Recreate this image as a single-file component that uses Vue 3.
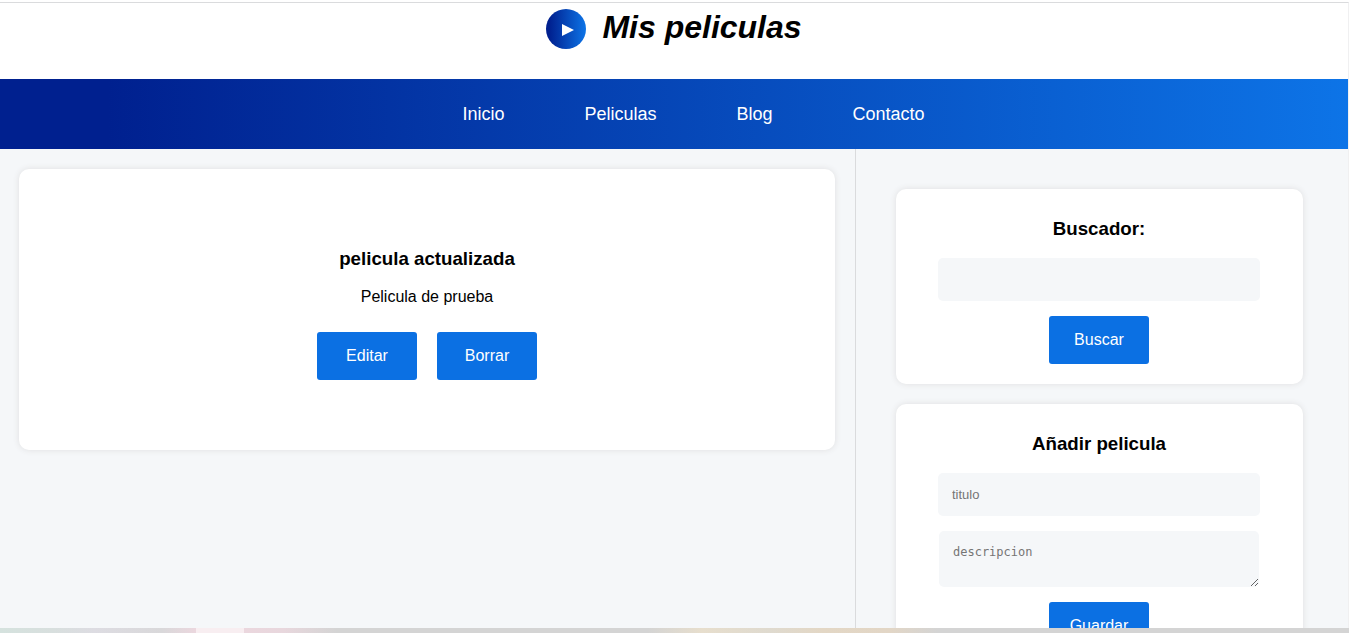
<script setup>
import { ref } from 'vue'

const links = ['Inicio', 'Peliculas', 'Blog', 'Contacto']
const movies = ref([
  { id: 1, title: 'pelicula actualizada', description: 'Pelicula de prueba' }
])
const search = ref('')
const title = ref('')
const description = ref('')
</script>

<template>
  <div class="window">
    <div class="layout">
      <header class="header">
        <svg class="logo" viewBox="0 0 40 40" aria-hidden="true">
          <defs>
            <linearGradient id="logo-fill" x1="0" y1="0" x2="1" y2="0">
              <stop offset="0.08" stop-color="#00208f" />
              <stop offset="1" stop-color="#0d74e7" />
            </linearGradient>
          </defs>
          <circle cx="20" cy="20" r="20" fill="url(#logo-fill)" />
          <path d="M16 15 L28 21 L16 27 Z" fill="#fff" />
        </svg>
        <h1>Mis peliculas</h1>
      </header>

      <nav class="nav">
        <ul>
          <li v-for="link in links" :key="link"><a href="#">{{ link }}</a></li>
        </ul>
      </nav>

      <div class="body">
        <main class="content">
          <article v-for="movie in movies" :key="movie.id" class="card movie">
            <h3>{{ movie.title }}</h3>
            <p>{{ movie.description }}</p>
            <div class="actions">
              <button type="button" class="btn">Editar</button>
              <button type="button" class="btn">Borrar</button>
            </div>
          </article>
        </main>

        <aside class="sidebar">
          <form class="card panel" @submit.prevent>
            <h3><label for="search">Buscador:</label></h3>
            <input id="search" v-model="search" type="text" />
            <button class="btn">Buscar</button>
          </form>
          <form class="card panel" @submit.prevent>
            <h3>Añadir pelicula</h3>
            <input v-model="title" type="text" placeholder="titulo" aria-label="titulo" />
            <textarea v-model="description" placeholder="descripcion" aria-label="descripcion"></textarea>
            <button class="btn">Guardar</button>
          </form>
        </aside>
      </div>
    </div>
    <div class="strip"></div>
  </div>
</template>

<style>
body {
  background: #f5f7f9;
}
</style>

<style scoped>
.window {
  display: flex;
  flex-direction: column;
  height: 100vh;
  overflow: hidden;
  padding-top: 2px;
  box-sizing: border-box;
  background: #fff;
  font-family: "Liberation Sans", Arial, sans-serif;
  font-size: 16px;
  color: #000;
}

.layout {
  flex: 1;
  min-height: 0;
  display: flex;
  flex-direction: column;
  overflow: hidden;
  border-top: 1px solid #dadbdd;
  border-right: 1px solid #f0f0f1;
}

.header {
  flex: none;
  display: flex;
  justify-content: center;
  gap: 16px;
  height: 76px;
  padding-top: 6px;
  box-sizing: border-box;
  background: #fff;
}

.logo {
  width: 40px;
  height: 40px;
}

h1 {
  margin: 0;
  font-size: 32px;
  line-height: 36px;
  font-style: italic;
}

.nav {
  flex: none;
  background: linear-gradient(to right, #00208f 8%, #0d74e7);
}

.nav ul {
  display: flex;
  justify-content: center;
  gap: 80px;
  margin: 0;
  padding: 1px 0 0 39px;
  list-style: none;
}

.nav a {
  display: block;
  line-height: 69px;
  font-size: 18px;
  color: #fff;
  text-decoration: none;
}

.body {
  flex: 1 0 auto;
  display: grid;
  grid-template-columns: 855fr 493fr;
  background: #f5f7f9;
}

.content {
  padding: 20px 20px 20px 19px;
}

.sidebar {
  padding: 40px 45px 0 40px;
  border-left: 1px solid #dadbdd;
}

.card {
  background: #fff;
  border-radius: 10px;
  box-shadow: 0 0 6px #dfdfe0;
  text-align: center;
}

.movie {
  padding: 78px 20px 70px;
}

h3 {
  margin: 0;
  line-height: 24px;
}

.movie p {
  margin: 16px 0 26px;
  line-height: 19px;
}

.actions {
  display: flex;
  justify-content: center;
  gap: 20px;
}

.panel {
  display: flex;
  flex-direction: column;
  align-items: center;
  gap: 15px;
  margin-bottom: 20px;
  padding: 28px 43px 20px 42px;
}

.panel h3 {
  margin-bottom: 2px;
}

.btn {
  width: 100px;
  height: 48px;
  padding: 0;
  border: 0;
  border-radius: 3px;
  background: #0b70e3;
  color: #fff;
  font-family: inherit;
  font-size: 16px;
  cursor: pointer;
}

input,
textarea {
  display: block;
  box-sizing: border-box;
  width: 100%;
  margin: 0;
  padding: 14px;
  border: 0;
  border-radius: 5px;
  background: #f5f7f9;
}

input {
  height: 43px;
  font-family: inherit;
  font-size: 13px;
}

textarea {
  width: calc(100% - 2px);
  height: 56px;
  font-family: "DejaVu Sans Mono", monospace;
  font-size: 12px;
}

input::placeholder,
textarea::placeholder {
  color: #757575;
}

.strip {
  flex: none;
  height: 5px;
  background:
    linear-gradient(
      to right,
      #d5e2de 0%,
      #d8dfde 4%,
      #dddce2 7%,
      #d9d8da 12%,
      #ebd7de 14.5%,
      #f8eef1 14.5%,
      #f8eef1 18.1%,
      #ebd7de 18.1%,
      #e8d7dd 21%,
      #d4d4d4 25%,
      #d4d4d4 48%,
      #e7decd 52%,
      #dfdacf 57%,
      #e3d7c5 61%,
      #e2d6c6 66%,
      #d4d4d4 69.5%,
      #d4d4d4 100%
    );
}
</style>
